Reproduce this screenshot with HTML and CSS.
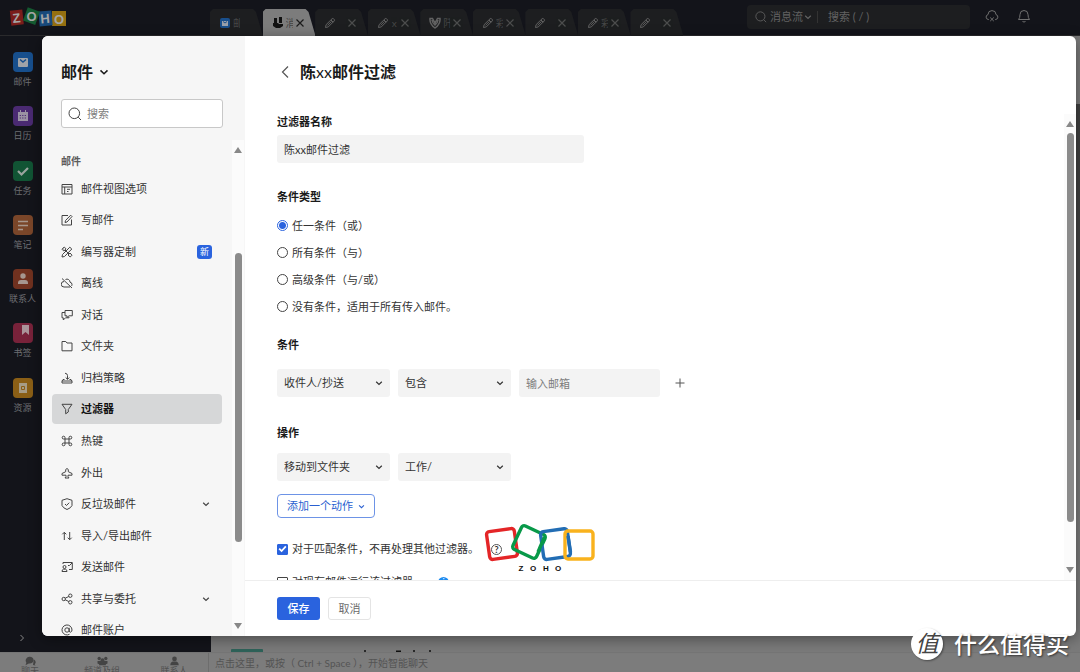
FILE: index.html
```html
<!DOCTYPE html>
<html lang="zh-CN">
<head>
<meta charset="utf-8">
<title>陈xx邮件过滤</title>
<link rel="stylesheet" href="styles.css">
</head>
<body>
<svg class="defs" aria-hidden="true">
  <symbol id="chev" viewBox="0 0 8 8"><path d="M1.200 2.700 4 5.400 6.800 2.700" stroke-width="1.200"/></symbol>
  <symbol id="cross" viewBox="0 0 10 10"><path d="M1.5 1.5l7 7M8.5 1.5l-7 7"/></symbol>
  <symbol id="pencil" viewBox="0 0 12 12"><path d="M1.5 10.5l.6-2.8L8 1.8q.8-.7 1.6 0l.6.6q.7.8 0 1.6L4.300 9.900zM7 3l2.200 2.200M3.500 8.400 7.500 4.400"/></symbol>
  <symbol id="lens" viewBox="0 0 14 14"><circle cx="6.300" cy="6.300" r="5.300"/><path d="M10.200 10.200 13 13"/></symbol>
</svg>

<div class="app">
  <header class="topbar">
    <svg class="brand" viewBox="0 0 58 20" role="img" aria-label="Zoho">
      <rect x="1.500" y="3" width="12.500" height="15" fill="#7a1d1b" transform="rotate(-6 8 10)"/>
      <rect x="43" y="4" width="14" height="15" fill="#957010"/>
      <rect x="30" y="4" width="13" height="15" fill="#18497b" transform="rotate(-5 36 11)"/>
      <rect x="16" y="2" width="13" height="14" fill="#145a30" transform="rotate(20 22 9)"/>
      <g class="brand-text"><text x="7.500" y="15.500" transform="rotate(-6 8 10)">Z</text><text x="22.500" y="14">O</text><text x="36" y="16" transform="rotate(-5 36 11)">H</text><text x="50" y="17">O</text></g>
    </svg>
    <nav class="tabs">
      <button class="tab"><svg class="i12" viewBox="0 0 12 12"><rect x="1" y="1" width="10" height="10" rx="2" fill="#194f8c" stroke="none"/><path fill="#9aa0aa" stroke="none" d="M3 4h6v5H3z"/><path d="M4 4.500 6 6 8 4.500" stroke="#194f8c"/></svg><span>邮</span></button>
      <button class="tab tab-on"><svg class="i12" viewBox="0 0 12 12"><path fill="#111" stroke="none" d="M2 1h3v5H2zM7 0h3v6H7zM1 6h5l1 1h4v2L8 11H4L1 9z"/></svg><span>消</span><svg class="i10"><use href="#cross"/></svg></button>
      <button class="tab"><svg class="i12"><use href="#pencil"/></svg><span></span><svg class="i10"><use href="#cross"/></svg></button>
      <button class="tab"><svg class="i12"><use href="#pencil"/></svg><span>x</span><svg class="i10"><use href="#cross"/></svg></button>
      <button class="tab"><svg class="i12" viewBox="0 0 12 12"><path d="M1 1.500h2.500L6 6l2.500-4.500H11Q11.500 7 6 11 .5 7 1 1.500zM3 3q.5 3.500 3 5 2.500-1.500 3-5" stroke-width="1.500"/></svg><span>阡</span><svg class="i10"><use href="#cross"/></svg></button>
      <button class="tab"><svg class="i12"><use href="#pencil"/></svg><span>彩</span><svg class="i10"><use href="#cross"/></svg></button>
      <button class="tab"><svg class="i12"><use href="#pencil"/></svg><span></span><svg class="i10"><use href="#cross"/></svg></button>
      <button class="tab"><svg class="i12"><use href="#pencil"/></svg><span>彩</span><svg class="i10"><use href="#cross"/></svg></button>
      <button class="tab"><svg class="i12"><use href="#pencil"/></svg><span></span><svg class="i10"><use href="#cross"/></svg></button>
    </nav>
    <div class="topsearch">
      <svg class="i12"><use href="#lens"/></svg>
      <button class="scope">消息流<svg class="i8"><use href="#chev"/></svg></button>
      <input type="text" aria-label="搜索" placeholder="搜索 ( / )">
    </div>
    <button class="topicon" aria-label="离线"><svg viewBox="0 0 14 14"><path d="M4 10.500H3.300A2.500 2.500 0 0 1 3 5.600 4 4 0 0 1 11 5.600a2.500 2.500 0 0 1-.3 4.900H10M5.200 8.500l3.600 3.600M8.800 8.500l-3.600 3.600"/></svg></button>
    <button class="topicon" aria-label="通知"><svg viewBox="0 0 14 14"><path d="M1.500 10.500q1.500-1.500 1.500-5a4 4 0 0 1 8 0q0 3.500 1.500 5zM5.500 12.500q1.500 1 3 0"/></svg></button>
  </header>

  <div class="workspace">
    <nav class="rail">
      <div class="rail-list">
        <a href="#" class="rail-item"><svg viewBox="0 0 20 20"><rect width="20" height="20" rx="4" fill="#174f8d"/><rect x="5" y="6" width="10" height="9" rx="1" fill="#a0a3a8"/><path d="M7 7.500l3 2.500 3-2.500" stroke="#174f8d" stroke-width="1.500"/></svg>邮件</a>
        <a href="#" class="rail-item"><svg viewBox="0 0 20 20"><rect width="20" height="20" rx="4" fill="#4a2a72"/><path fill="#9a93a3" d="M5 6h2V4h1v2h4V4h1v2h2v9H5z"/><path stroke="#4a2a72" stroke-width="1.200" stroke-dasharray="1.200 1.300" d="M6.700 9.500h7M6.700 12h7"/></svg>日历</a>
        <a href="#" class="rail-item"><svg viewBox="0 0 20 20"><rect width="20" height="20" rx="4" fill="#115434"/><path d="M5 10l3.500 3.500L15 7" stroke="#9aa39e" stroke-width="2.200"/></svg>任务</a>
        <a href="#" class="rail-item"><svg viewBox="0 0 20 20"><rect width="20" height="20" rx="4" fill="#7a4629"/><path d="M5 6.500h10M5 10.500h10M5 14.500h5" stroke="#a6968c" stroke-width="1.700"/></svg>笔记</a>
        <a href="#" class="rail-item"><svg viewBox="0 0 20 20"><rect width="20" height="20" rx="4" fill="#70311f"/><circle cx="10" cy="7" r="2.700" fill="#a6968f"/><path fill="#a6968f" d="M5 15v-1q0-3 3-3h4q3 0 3 3v1z"/></svg>联系人</a>
        <a href="#" class="rail-item"><svg viewBox="0 0 20 20"><rect width="20" height="20" rx="4" fill="#78223a"/><path fill="#ab949a" d="M9 2h7v10l-3.500-3L9 12z"/></svg>书签</a>
        <a href="#" class="rail-item"><svg viewBox="0 0 20 20"><rect width="20" height="20" rx="4" fill="#8b5f16"/><rect x="6" y="5" width="8" height="10" fill="#a79c86"/><path stroke="#8b5f16" d="M8.500 8.500h3v3h-3z"/></svg>资源</a>
      </div>
      <button class="rail-more" aria-label="展开"><svg viewBox="0 0 8 8"><path d="M2.500 1 5.500 4 2.500 7"/></svg></button>
    </nav>
    <div class="canvas">
      <svg class="scraps" viewBox="0 0 300 4" aria-hidden="true"><rect x="20" y="1" width="32" height="4" rx="1" fill="#2e6259"/><path stroke="#111" stroke-width="1.500" d="M154 2v2M185 3.300h5M203 2v2M219 2v2"/></svg>
      <div class="pagescroll"></div>
    </div>
  </div>

  <footer class="chatbar">
    <div class="chat-tabs">
      <button><svg viewBox="0 0 14 12"><path d="M6 1a5 4 0 1 1-1 8L1 11l1-3A4.500 4.500 0 0 1 6 1zM11 4q4 3 1 6l1 1.500-3-.8z"/></svg>聊天</button>
      <button><svg viewBox="0 0 14 12"><circle cx="3" cy="3" r="2"/><circle cx="11" cy="3" r="2"/><circle cx="7" cy="5" r="2.300"/><path d="M1 9V6h12v3l-2 1v1H3v-1z"/></svg>频道及组</button>
      <button><svg viewBox="0 0 14 12"><circle cx="7" cy="3.500" r="2.800"/><path d="M2 11q0-4 3-4.500h4q3 .5 3 4.500z"/></svg>联系人</button>
    </div>
    <p>点击这里，或按（ Ctrl + Space ），开始智能聊天</p>
  </footer>
</div>

<section class="modal" role="dialog" aria-label="设置">
  <aside class="side">
    <button class="side-title">邮件<svg><use href="#chev"/></svg></button>
    <label class="side-search"><svg><use href="#lens"/></svg><input type="text" placeholder="搜索" aria-label="搜索设置"></label>
    <div class="side-body">
      <div class="side-scroll">
        <h2>邮件</h2>
        <nav class="menu">
          <a href="#"><svg viewBox="0 0 12 12"><path d="M1 1.500h10v9.500H1zM1 4h10M3.700 4v7M6 6.300h3M6 8.500h1.500"/></svg>邮件视图选项</a>
          <a href="#"><svg viewBox="0 0 12 12"><path d="M7 1.500H1V11h9.500V5.500M4 8.500l.5-2L9.700 1.200l1.300 1.300L6 8z"/></svg>写邮件</a>
          <a href="#"><svg viewBox="0 0 12 12"><path d="M1 3.200 3.200 1 5 2.800 4 4 2.800 5zM7 9l2.200 2 1.800-1.800L9 7zM1 11l.5-2.500 7.300-7.300L10.800 3 3.500 10.500zM4 4l4 4M3 2.500l-.7.700"/></svg>编写器定制<span class="badge">新</span></a>
          <a href="#"><svg viewBox="0 0 12 12"><path d="M1 1.500l10 9.500M3 4.500A2.700 2.700 0 0 0 3 10h6M4.500 2.500a3 3 0 0 1 4.500 2.700q2 .3 2 2.300 0 .8-.5 1.500"/></svg>离线</a>
          <a href="#"><svg viewBox="0 0 12 12"><path d="M4 1.500h7.300v5.300H8L6 8.500V6.800H4zM4 3.500H1v5.300h1.300V11l2.200-2.200H8V8"/></svg>对话</a>
          <a href="#"><svg viewBox="0 0 12 12"><path d="M1 10.800V1.500h3.800L6 3h5v7.800z"/></svg>文件夹</a>
          <a href="#"><svg viewBox="0 0 12 12"><path d="M3.500 7.500H2L1 9v2h10V9l-1-1.500H8.500M1 9h10M6.500 7.300V3.500q0-2-2.500-2.300M4.700 5.500l1.800 1.800 1.800-1.800"/></svg>归档策略</a>
          <a href="#" class="on" aria-current="page"><svg viewBox="0 0 12 12"><path d="M1 1.300h10L7.300 6.500V9L4.700 10.800V6.500z"/></svg>过滤器</a>
          <a href="#"><svg viewBox="0 0 12 12"><path d="M4 4h4v4H4zM4 4H2.700A1.400 1.400 0 1 1 4 2.600zM8 4V2.600A1.400 1.400 0 1 1 9.300 4zM8 8h1.300A1.400 1.400 0 1 1 8 9.400zM4 8v1.400A1.400 1.400 0 1 1 2.700 8z"/></svg>热键</a>
          <a href="#"><svg viewBox="0 0 12 12"><path d="M5 8.200H1V6.500l3.700-1.800V2.500Q6 .5 7.300 2.500v2.200L11 6.500v1.700H7v1.300l1 1.500H4l1-1.500z"/></svg>外出</a>
          <a href="#"><svg viewBox="0 0 12 12"><path d="M6 .7 11 2.300v5.200Q10 10 6 11.500 2 10 1 7.500V2.300zM4 6l1.500 1.500L8.200 4.700"/></svg>反垃圾邮件<svg class="more"><use href="#chev"/></svg></a>
          <a href="#"><svg viewBox="0 0 12 12"><path d="M3.300 10V2.300M1.300 4.300l2-2 2 2M8.700 2v7.700M6.700 7.700l2 2 2-2"/></svg>导入/导出邮件</a>
          <a href="#"><svg viewBox="0 0 12 12"><path d="M2 3V1.500h9.300v7H8M7 4.500h1.500L11 2M1 10.500q0-2 1.500-2.300h2Q6 8.500 6 10.500z"/><circle cx="3.500" cy="6" r="1.500"/></svg>发送邮件</a>
          <a href="#"><svg viewBox="0 0 12 12"><circle cx="2.700" cy="6" r="1.700"/><circle cx="9.300" cy="2.700" r="1.700"/><circle cx="9.300" cy="9.300" r="1.700"/><path d="M4.200 5.200 7.800 3.500M4.200 6.800l3.600 1.700"/></svg>共享与委托<svg class="more"><use href="#chev"/></svg></a>
          <a href="#"><svg viewBox="0 0 12 12"><circle cx="6" cy="6" r="2.200"/><path d="M8.200 3.800V7q.3 1.300 1.500 1.200Q11 7.500 11 6A5 5 0 1 0 8.500 10.300"/></svg>邮件账户</a>
        </nav>
      </div>
      <div class="bar" aria-hidden="true"><i class="up"></i><div class="track"><i class="thumb thumb-side"></i></div><i class="down"></i></div>
    </div>
  </aside>

  <main class="panel">
    <header class="panel-head"><button aria-label="返回"><svg viewBox="0 0 8 14"><path d="M7 1.500 1.500 7 7 12.500"/></svg></button><h1>陈<span>xx</span>邮件过滤</h1></header>
    <div class="panel-body">
      <form class="form" id="filter">
        <label class="cap" for="name">过滤器名称</label>
        <input class="field name" id="name" type="text" value="陈xx邮件过滤">
        <fieldset>
          <legend class="cap">条件类型</legend>
          <label><input type="radio" name="type" checked>任一条件（或）</label>
          <label><input type="radio" name="type">所有条件（与）</label>
          <label><input type="radio" name="type">高级条件（与/或）</label>
          <label><input type="radio" name="type">没有条件，适用于所有传入邮件。</label>
        </fieldset>
        <h2 class="cap cap-cond">条件</h2>
        <div class="row">
          <div class="pick"><select aria-label="字段"><option>收件人/抄送</option></select><svg><use href="#chev"/></svg></div>
          <div class="pick"><select aria-label="比较"><option>包含</option></select><svg><use href="#chev"/></svg></div>
          <input class="field mail" type="text" placeholder="输入邮箱" aria-label="输入邮箱">
          <button type="button" class="plus" aria-label="添加条件"><svg viewBox="0 0 10 10"><path d="M5 .5v9M.5 5h9"/></svg></button>
        </div>
        <h2 class="cap cap-act">操作</h2>
        <div class="row">
          <div class="pick"><select aria-label="操作"><option>移动到文件夹</option></select><svg><use href="#chev"/></svg></div>
          <div class="pick"><select aria-label="文件夹"><option>工作/</option></select><svg><use href="#chev"/></svg></div>
        </div>
        <button type="button" class="add">添加一个动作<svg><use href="#chev"/></svg></button>
        <div class="check"><label><input type="checkbox" checked>对于匹配条件，不再处理其他过滤器。</label><span class="help">?</span></div>
        <div class="check check-2"><label><input type="checkbox">对现有邮件运行该过滤器。</label><span class="info">i</span></div>
      </form>
      <div class="bar" aria-hidden="true"><i class="up"></i><div class="track"><i class="thumb thumb-main"></i></div><i class="down"></i></div>
    </div>
    <footer class="actions"><button class="save" form="filter">保存</button><button class="cancel" type="button">取消</button></footer>
  </main>
</section>

<svg class="sticker" viewBox="484 522 112 52" role="img" aria-label="Zoho">
  <rect x="488" y="530" width="28" height="28" rx="3" stroke="#e42527" transform="rotate(-8 502 544)"/>
  <rect x="516" y="529" width="26" height="26" rx="3" stroke="#089949" transform="rotate(25 529 542)"/>
  <rect x="542" y="530" width="27" height="28" rx="3" stroke="#226db4" transform="rotate(-8 556 544)"/>
  <rect x="565" y="531" width="28" height="28" rx="3" stroke="#f9b21d"/>
  <path stroke="#089949" d="M544.500 537 538 552"/>
  <path stroke="#226db4" d="M568 536 570.500 552"/>
  <g class="sticker-text"><text x="521" y="571">Z</text><text x="533" y="571">O</text><text x="546" y="571">H</text><text x="558" y="571">O</text></g>
</svg>

<div class="watermark"><span class="seal">值</span>什么值得买</div>
</body>
</html>
```

FILE: styles.css
```css
* { box-sizing: border-box; }
body {
  margin: 0;
  height: 100vh;
  overflow: hidden;
  position: relative;
  font: 11px/16px Lato, "Noto Sans CJK SC", sans-serif;
  color: #333;
  background: #7d7d7d;
}
button, input, select { font: inherit; color: inherit; margin: 0; }
button { border: 0; padding: 0; background: none; }
a { color: inherit; text-decoration: none; }
h1, h2, p { margin: 0; }
svg { display: block; flex: none; fill: none; stroke: currentColor; }
text { stroke: none; text-anchor: middle; }
.defs { position: absolute; width: 0; height: 0; }
.i8 { width: 8px; height: 8px; }
.i10 { width: 10px; height: 10px; }
.i12 { width: 12px; height: 12px; }

/* dimmed application behind the dialog */
.app { height: 100%; display: flex; flex-direction: column; }
.topbar {
  height: 36px;
  flex: none;
  display: flex;
  align-items: flex-start;
  padding-left: 9px;
  background: #13141a;
  border-bottom: 1px solid #2a2a2c;
  color: #626262;
}
.brand { width: 58px; height: 20px; margin: 7px 143px 0 0; stroke: none; }
.brand-text { font: bold 13px/1 "Liberation Sans", sans-serif; fill: #a5a5a5; }
.tabs { display: grid; grid-template-columns: repeat(9, 1fr); width: 473px; margin-top: 9px; flex: none; }
.tab {
  height: 27px;
  display: flex;
  align-items: center;
  padding-left: 9px;
  font-size: 10px;
  background: #1d1e20;
  clip-path: polygon(0 3px, 3px 0, 43px 0, 46px 3px, 53px 100%, 0 100%);
}
.tab span { width: 7px; height: 16px; overflow: hidden; margin: 0 2px; opacity: .6; }
.tab .i10 { opacity: .7; stroke-width: 1.2; }
.tab-on { background: #7c7c7c; color: #1b1b1b; }
.tab-on .i10 { opacity: 1; }
.topsearch {
  flex: 0 1 223px;
  height: 24px;
  margin: 5px 15px 0 auto;
  padding: 0 8px;
  display: flex;
  align-items: center;
  gap: 3px;
  border-radius: 4px;
  background: #1d1e20;
}
.scope { display: flex; align-items: center; gap: 1px; padding-right: 5px; border-right: 1px solid #333; line-height: 12px; }
.topsearch input { min-width: 0; flex: 1; border: 0; background: none; padding: 0 0 0 7px; }
.topsearch input::placeholder { color: #626262; }
.topicon { margin: 9px 18px 0 0; color: #707070; }
.topicon svg { width: 14px; height: 14px; }
.topicon:last-child { margin-right: 49px; }
.workspace { flex: 1; min-height: 0; display: flex; }
.rail { width: 211px; background: #13141a; display: flex; flex-direction: column; justify-content: space-between; padding-top: 16px; }
.rail-list { width: 45px; height: 380px; display: grid; grid-template-rows: repeat(7, 1fr); }
.rail-item { display: flex; flex-direction: column; align-items: center; gap: 2px; font-size: 9px; color: #6d6e72; }
.rail-item svg { width: 20px; height: 20px; stroke: none; }
.rail-more { width: 44px; padding: 10px 18px; color: #888; }
.rail-more svg { width: 8px; height: 8px; }
.canvas { flex: 1; display: flex; justify-content: space-between; align-items: flex-end; background: #7a7a7a; }
.scraps { width: 300px; height: 4px; stroke: none; }
.pagescroll { width: 4px; align-self: stretch; margin: 68px 0 232px; background: #404040; }
.chatbar { height: 20px; flex: none; overflow: hidden; display: flex; background: #7c7c7c; border-top: 1px solid #757575; color: #505050; }
.chat-tabs { flex: 0 0 209px; display: grid; grid-template-columns: repeat(3, 72px); overflow: hidden; border-right: 1px solid #6d6d6d; }
.chat-tabs button { display: flex; flex-direction: column; align-items: center; font-size: 9px; line-height: 10px; padding: 3px 12px 0 0; height: 30px; white-space: nowrap; }
.chat-tabs svg { width: 13px; height: 10px; fill: #444; stroke: none; }
.chatbar p { padding: 2px 6px; font-size: 10px; color: #545454; white-space: nowrap; }

/* settings dialog */
.modal {
  position: absolute;
  inset: 36px 4px 36px 42px;
  display: flex;
  border-radius: 6px;
  overflow: hidden;
  background: #fff;
  box-shadow: 0 3px 14px rgba(0, 0, 0, .4);
}
.side { flex: 0 0 203px; min-width: 0; display: flex; flex-direction: column; background: #f6f6f6; }
.side-title { align-self: flex-start; display: flex; align-items: center; gap: 6px; margin: 24px 0 15px 19px; font-size: 16px; line-height: 24px; font-weight: 700; color: #1a1a1a; }
.side-title svg { width: 10px; height: 10px; }
.side-search { height: 29px; flex: none; margin: 0 22px 12px 19px; padding: 0 6px; display: flex; align-items: center; gap: 5px; border: 1px solid #c8c8c8; border-radius: 3px; background: #fff; }
.side-search svg { width: 14px; height: 14px; color: #444; }
.side-search input { border: 0; padding: 0; min-width: 0; width: 0; flex: 1; outline: 0; background: none; }
::placeholder { color: #7d7d7d; opacity: 1; }
.side-body { flex: 1; min-height: 0; display: flex; }
.side-scroll { flex: 1; min-width: 0; overflow: hidden; padding: 13px 10px 0; }
.side-scroll h2 { padding-left: 9px; font-size: 10px; font-weight: 700; color: #5c5c5c; margin-bottom: 4px; }
.menu { display: grid; grid-template-rows: repeat(15, 1fr); align-items: center; min-height: 473px; }
.menu a { height: 30px; display: flex; align-items: center; gap: 8px; padding: 0 10px 0 9px; border-radius: 4px; }
.menu svg { width: 12px; height: 12px; color: #444; }
.menu .more { width: 8px; height: 8px; margin: 0 2px 0 auto; }
.menu .on { background: #d6d7d8; font-weight: 700; color: #111; }
.badge { margin-left: auto; width: 15px; height: 14px; border-radius: 3px; background: #2a63de; color: #fff; font-size: 9px; line-height: 14px; text-align: center; }

/* scrollbars */
.bar { flex: 0 0 12px; display: flex; flex-direction: column; align-items: center; padding: 7px 0; background: #fbfbfb; }
.side .bar { margin-right: 1px; }
.bar i { display: block; }
.up, .down { border: 4px solid transparent; flex: none; }
.up { border-top: 0; border-bottom: 6px solid #888; }
.down { border-bottom: 0; border-top: 6px solid #888; }
.track { flex: 1; width: 7px; margin: 6px 0; }
.thumb { border-radius: 4px; background: #8b8b8b; }
.thumb-side { height: 63%; margin-top: 94px; }
.thumb-main { height: 91%; }

/* filter form */
.panel { flex: 1; min-width: 0; display: flex; flex-direction: column; }
.panel-head { display: flex; align-items: center; gap: 11px; padding: 24px 36px 30px 36px; line-height: 24px; }
.panel-head svg { width: 8px; height: 14px; color: #555; stroke-width: 1.2; }
.panel-head h1 { font-size: 16px; color: #1a1a1a; }
.panel-head span { font-weight: 400; }
.panel-body { flex: 1; min-height: 0; display: flex; }
.form { flex: 1; min-width: 0; overflow: hidden; padding-left: 32px; }
.cap { display: block; padding: 0; font-size: 11px; font-weight: 700; color: #1a1a1a; }
.field { display: block; height: 28px; border: 0; border-radius: 3px; padding: 0 7px; background: #f3f3f3; }
.name { width: 307px; margin-top: 5px; }
.mail { width: 141px; }
fieldset { border: 0; margin: 26px 0 0; padding: 0; min-width: 0; }
fieldset legend { margin-bottom: 7px; }
fieldset label { display: flex; align-items: center; height: 27px; gap: 4px; }
.cap-cond { margin: 17px 0 16px; }
.cap-act { margin: 28px 0 12px; }
.row { display: flex; gap: 8px; }
.pick { display: grid; width: 113px; align-items: center; }
.pick > * { grid-area: 1 / 1; }
.pick select { appearance: none; height: 28px; width: 100%; border: 0; border-radius: 3px; padding: 0 20px 0 7px; background: #f3f3f3; }
.pick svg { width: 8px; height: 8px; justify-self: end; margin-right: 7px; pointer-events: none; }
.plus { padding: 0 7px; color: #555; }
.plus svg { width: 10px; height: 10px; }
.add { display: flex; align-items: center; gap: 5px; height: 24px; margin: 13px 0 23px; padding: 0 9px; border: 1px solid #6d93e6; border-radius: 4px; color: #2a5fd0; }
.add svg { width: 7px; height: 7px; }
input[type="radio"], input[type="checkbox"] { appearance: none; flex: none; width: 11px; height: 11px; border: 1px solid #444; background: #fff; }
input[type="radio"] { border-radius: 50%; }
input[type="radio"]:checked { border-color: #2a63de; background: radial-gradient(circle, #2a63de 3px, #fff 4px); }
input[type="checkbox"] { border-radius: 1px; display: grid; place-items: center; }
input[type="checkbox"]:checked { border-color: #2a63de; background: #2a63de; }
input[type="checkbox"]:checked::before {
  content: "";
  width: 9px;
  height: 9px;
  background: #fff;
  clip-path: polygon(6% 52%, 20% 38%, 40% 58%, 80% 14%, 94% 28%, 40% 86%);
}
.check { display: flex; align-items: center; gap: 12px; }
.check label { display: flex; align-items: center; gap: 4px; }
.check-2 { margin-top: 17px; gap: 14px; }
.help, .info { width: 11px; height: 11px; border-radius: 50%; line-height: 10px; font-size: 9px; text-align: center; }
.help { border: 1px solid #555; line-height: 9px; font-weight: 700; }
.info { background: #1d8bf0; color: #fff; }
.actions { flex: none; height: 56px; display: flex; gap: 8px; padding: 16px 32px; border-top: 1px solid #eee; }
.actions button { width: 43px; height: 23px; border-radius: 3px; }
.actions .save { background: #2a63de; color: #fff; font-weight: 500; }
.actions .cancel { border: 1px solid #e4e4e4; color: #6b6b6b; }

/* overlays */
.sticker { position: absolute; left: 484px; top: 522px; width: 112px; height: 52px; stroke-width: 3.4; }
.sticker-text { font: bold 8px/1 "Liberation Sans", sans-serif; fill: #111; }
.watermark { position: absolute; right: 11px; bottom: 12px; display: flex; align-items: center; gap: 11px; font-size: 23px; line-height: 32px; font-weight: 500; color: #fff; text-shadow: 1px 1px 2px #333; }
.seal { width: 32px; height: 32px; border-radius: 50%; background: #fff; color: #444; font-size: 23px; line-height: 31px; text-align: center; font-style: italic; font-weight: 400; text-shadow: none; box-shadow: 1px 1px 2px rgba(0, 0, 0, .4); }
```
